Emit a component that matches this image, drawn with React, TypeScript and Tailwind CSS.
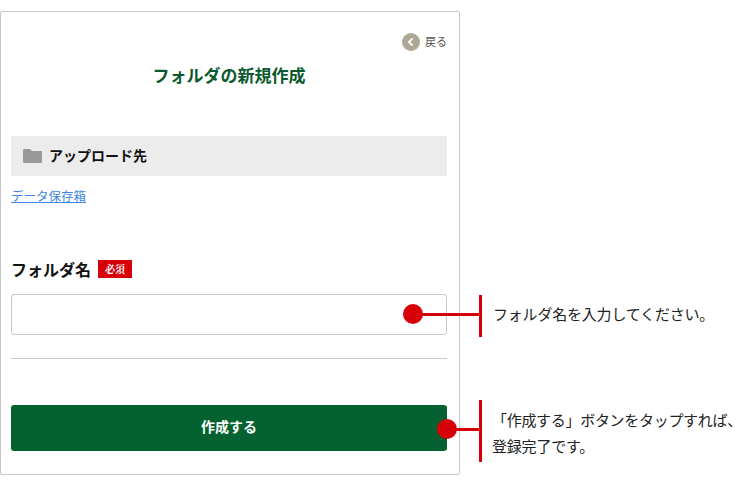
const jp = `"Noto Sans CJK JP", "Liberation Sans", sans-serif`;

// 赤い丸 + 線 + 縦棒 の注釈
function Callout({ dotX, dotY, barTop, barHeight }: { dotX: number; dotY: number; barTop: number; barHeight: number }) {
  return (
    <>
      <div
        className="absolute h-[20px] w-[20px] rounded-full bg-[#d70008]"
        style={{ left: dotX - 10, top: dotY - 10 }}
      />
      <div
        className="absolute h-[3px] bg-[#d70008]"
        style={{ left: dotX, top: dotY - 1, width: 480 - dotX }}
      />
      <div
        className="absolute w-[3px] bg-[#d70008]"
        style={{ left: 479, top: barTop, height: barHeight }}
      />
    </>
  );
}

export default function App() {
  return (
    <div className="relative h-[485px] w-[750px] overflow-hidden bg-white" style={{ fontFamily: jp }}>
      <div className="pt-[11px]">
        {/* パネル */}
        <div className="flex h-[464px] w-[460px] flex-col rounded-[2px] border border-[#c8c8c8] pl-[10px] pr-[12px]">
          {/* 戻る */}
          <div className="mt-[20px] flex h-[19px] items-center justify-end gap-[5px]">
            <span className="flex h-[18px] w-[18px] items-center justify-center rounded-full bg-[#aea795]">
              <svg width="10" height="10" viewBox="0 0 10 10" fill="none" stroke="#fff" strokeWidth="1.8">
                <path d="M6.5 1.5 3 5l3.5 3.5" />
              </svg>
            </span>
            <span className="text-[11px] leading-none text-[#555]">戻る</span>
          </div>

          <h1 className="mt-[12px] text-center text-[17px] font-bold leading-[24px] text-[#0b5a2e]">
            フォルダの新規作成
          </h1>

          {/* アップロード先 */}
          <div className="mt-[49px] flex h-[40px] items-center gap-[7px] bg-[#ececec] pb-[1px] pl-[12px]">
            <svg width="19" height="14" viewBox="0 0 19 14" fill="#999">
              <path d="M0 1a1 1 0 0 1 1-1h6l2 2h9a1 1 0 0 1 1 1v10a1 1 0 0 1-1 1H1a1 1 0 0 1-1-1z" />
            </svg>
            <span className="pb-[2px] text-[14px] font-bold leading-none text-[#111]">アップロード先</span>
          </div>

          <a className="mt-[11px] self-start text-[12.5px] leading-[18px] text-[#3d87dc] underline">データ保存箱</a>

          {/* フォルダ名 */}
          <div className="mt-[55px] flex h-[18px] items-center gap-[7px]">
            <span className="text-[16px] font-bold leading-none text-[#111]">フォルダ名</span>
            <span className="flex h-[18px] w-[34px] items-center justify-center bg-[#d70008] text-[10px] font-bold leading-none text-white" style={{ fontFamily: `"Noto Serif CJK JP", ${jp}` }}>
              必須
            </span>
          </div>

          <input className="mt-[16px] h-[41px] w-full rounded-[3px] border border-[#c8c8c8] bg-white" />

          <hr className="mt-[23px] border-0 border-t border-[#c8c8c8]" />

          <button className="mt-[46px] h-[46px] w-full rounded-[3px] bg-[#03622f] pb-[3px] text-[14px] font-bold text-white">
            作成する
          </button>
        </div>
      </div>

      {/* 注釈 */}
      <Callout dotX={413} dotY={314} barTop={295} barHeight={42} />
      <Callout dotX={447} dotY={429} barTop={400} barHeight={62} />

      <p className="absolute left-[493px] top-[304px] whitespace-nowrap text-[15px] leading-[20px] tracking-[-0.2px] text-[#222]">
        フォルダ名を入力してください。
      </p>
      <p className="absolute left-[492px] top-[407px] whitespace-nowrap text-[15px] leading-[26px] tracking-[-0.2px] text-[#222]">
        <span className="tracking-[-0.3px]">「作成する」ボタンをタップすれば、</span>
        <br />
        登録完了です。
      </p>
    </div>
  );
}
